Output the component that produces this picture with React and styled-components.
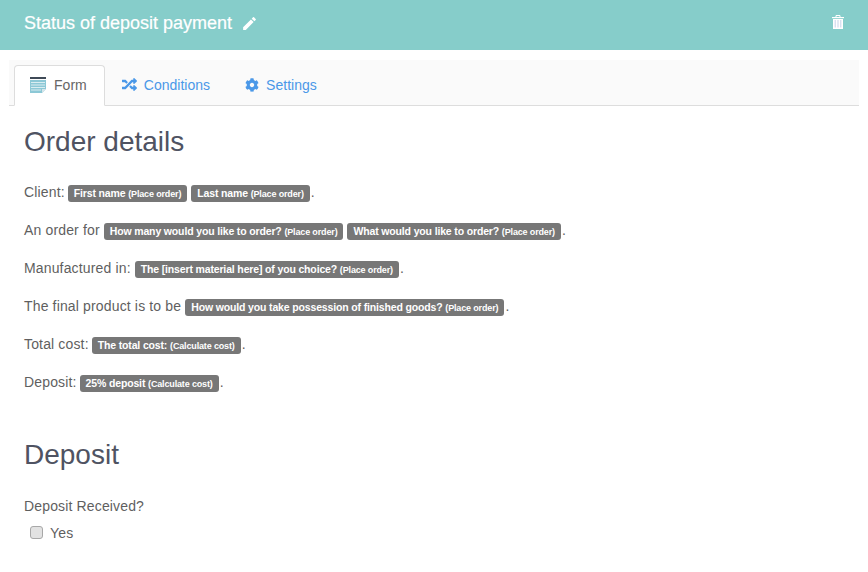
import React from "react";
import styled, { createGlobalStyle } from "styled-components";
import { FaRandom, FaCog } from "react-icons/fa";
import { MdEdit } from "react-icons/md";

const GlobalStyle = createGlobalStyle`
  html, body {
    margin: 0;
    padding: 0;
    background: #fff;
    font-family: "Liberation Sans", Arial, sans-serif;
    font-size: 14px;
    color: #555;
  }
`;

const Page = styled.div`
  width: 868px;
  height: 572px;
  overflow: hidden;
`;

const Header = styled.header`
  height: 50px;
  padding: 0 24px;
  background: #86cdca;
  color: #fff;
  display: flex;
  align-items: center;
  justify-content: space-between;
  box-sizing: border-box;
`;

const TitleGroup = styled.div`
  display: flex;
  align-items: center;
  gap: 9px;
  margin-top: -3px;
`;

const Title = styled.h1`
  margin: 0;
  font-size: 18px;
  font-weight: 400;
  -webkit-text-stroke: 0.2px #fff;
`;

const TrashSvg = styled.svg`
  margin-top: -6px;
`;

const TabBar = styled.nav`
  margin: 10px 9px 0;
  height: 46px;
  padding: 5px 0 0 5px;
  box-sizing: border-box;
  background: #fafafa;
  border-bottom: 1px solid #ddd;
  display: flex;
`;

const Tab = styled.a`
  height: 41px;
  box-sizing: border-box;
  display: flex;
  align-items: center;
  gap: ${(p) => (p.$active ? "8px" : "7px")};
  padding: ${(p) => (p.$active ? "0 17px 2px 15px" : "0 17px 2px 16px")};
  font-size: 14px;
  letter-spacing: 0.02px;
  color: ${(p) => (p.$active ? "#666" : "#4a98e8")};
  background: ${(p) => (p.$active ? "#fff" : "transparent")};
  border: 1px solid ${(p) => (p.$active ? "#ddd" : "transparent")};
  border-bottom-color: ${(p) => (p.$active ? "#fff" : "transparent")};
  border-radius: 4px 4px 0 0;
`;

const Content = styled.main`
  padding: 20px 24px 0;
`;

const Heading = styled.h2`
  margin: 0;
  font-size: 28px;
  line-height: 31px;
  font-weight: 400;
  color: #4f5362;
`;

const Lines = styled.div`
  margin-top: 25px;
  margin-bottom: 47px;
  display: flex;
  flex-direction: column;
  gap: 18px;
`;

const Line = styled.p`
  margin: 0;
  line-height: 20px;
  color: #5f5f5f;
  letter-spacing: 0.15px;
`;

const Question = styled(Line)`
  margin-top: 26px;
`;

const Chip = styled.span`
  display: inline-block;
  margin-left: ${(p) => p.$shift}px;
  margin-right: 1px;
  padding: 0 6px;
  height: 17px;
  line-height: 17px;
  background: #777;
  border-radius: 3px;
  color: #fff;
  font-size: 10.5px;
  font-weight: 700;
  letter-spacing: -0.15px;
  white-space: nowrap;
  small {
    font-size: 9px;
    font-weight: 700;
  }
`;

const CheckRow = styled.label`
  margin: 7px 0 0 6px;
  display: flex;
  align-items: center;
  gap: 7px;
  line-height: 20px;
  color: #5f5f5f;
  letter-spacing: 0.15px;
`;

const Box = styled.input`
  appearance: none;
  width: 13px;
  height: 13px;
  margin: -2px 0 0;
  box-sizing: border-box;
  background: #e2e2e2;
  border: 1px solid #a8a8a8;
  border-radius: 3px;
`;

const FormIcon = () => (
  <svg width="16" height="16" viewBox="0 0 16 16">
    <rect x="0" y="0" width="16" height="2" fill="#3f4a57" />
    <path d="M0 3h16v9l-4 4H0z" fill="#8cc8d6" />
    <path d="M12 16v-4h4z" fill="#d6e6ea" />
    <path d="M1 5.5h14M1 8h14M1 10.5h14M1 13h10" stroke="#e2f1f4" strokeWidth="0.9" />
  </svg>
);

const TrashIcon = () => (
  <TrashSvg width="12" height="14" viewBox="0 0 12 14">
    <path d="M4 2V.5h4V2" fill="none" stroke="#fff" />
    <rect x="0" y="2" width="12" height="1.2" fill="#fff" />
    <path d="M1 4h10v10H1z" fill="#fff" />
    <path d="M3.2 5v7.5M6 5v7.5M8.8 5v7.5" stroke="#c9d3ea" strokeWidth="1" />
  </TrashSvg>
);

const Field = ({ name, source, shift = 0 }) => (
  <Chip $shift={shift}>
    {name} <small>({source})</small>
  </Chip>
);

export default function App() {
  return (
    <Page>
      <GlobalStyle />
      <Header>
        <TitleGroup>
          <Title>Status of deposit payment</Title>
          <MdEdit size={17} />
        </TitleGroup>
        <TrashIcon />
      </Header>
      <TabBar>
        <Tab $active>
          <FormIcon />
          Form
        </Tab>
        <Tab>
          <FaRandom size={15} />
          Conditions
        </Tab>
        <Tab>
          <FaCog size={14} />
          Settings
        </Tab>
      </TabBar>
      <Content>
        <Heading>Order details</Heading>
        <Lines>
          <Line>
            Client: <Field shift={-1} name="First name" source="Place order" />
            <Field shift={3} name="Last name" source="Place order" />.
          </Line>
          <Line>
            An order for <Field name="How many would you like to order?" source="Place order" />
            <Field shift={3} name="What would you like to order?" source="Place order" />.
          </Line>
          <Line>
            Manufactured in: <Field name="The [insert material here] of you choice?" source="Place order" />.
          </Line>
          <Line>
            The final product is to be{" "}
            <Field name="How would you take possession of finished goods?" source="Place order" />.
          </Line>
          <Line>
            Total cost: <Field shift={-1} name="The total cost:" source="Calculate cost" />.
          </Line>
          <Line>
            Deposit: <Field shift={-1} name="25% deposit" source="Calculate cost" />.
          </Line>
        </Lines>
        <Heading>Deposit</Heading>
        <Question>Deposit Received?</Question>
        <CheckRow>
          <Box type="checkbox" />
          Yes
        </CheckRow>
      </Content>
    </Page>
  );
}
